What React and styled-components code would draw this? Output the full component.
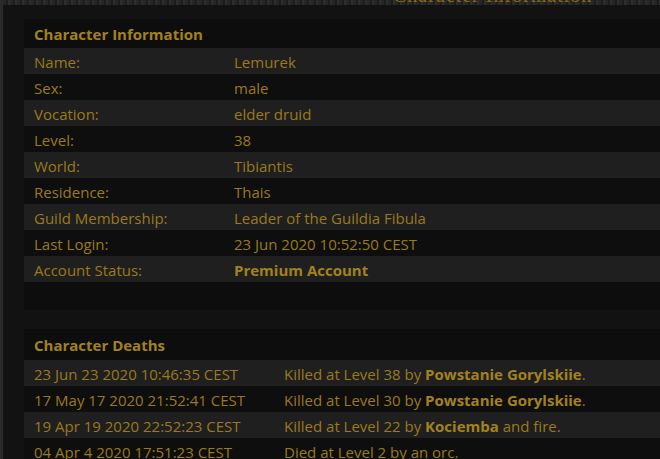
import React from 'react'
import styled, { createGlobalStyle } from 'styled-components'

const GlobalStyle = createGlobalStyle`
  html, body {
    margin: 0;
    padding: 0;
    background: #121212;
    overflow: hidden;
  }
  body {
    font-family: "Open Sans", "Noto Sans", "DejaVu Sans", sans-serif;
    font-size: 15px;
    color: #9a7a1c;
  }
`

const Page = styled.div`
  width: 660px;
  height: 459px;
  border-left: 3px solid #2a2a2a;
  box-sizing: border-box;
  overflow: hidden;
`

const TopBar = styled.div`
  height: 5px;
  overflow: hidden;
  background: repeating-linear-gradient(90deg, #262626 0 3px, #1c1c1c 3px 5px, #2e2e2e 5px 7px);
  display: flex;
  justify-content: flex-start;
  padding-left: 390px;
`

const TopTitle = styled.span`
  font-family: "Liberation Serif", serif;
  font-size: 20px;
  line-height: 20px;
  margin-top: -15px;
  color: #8a6a1a;
  letter-spacing: 1px;
  white-space: nowrap;
`

const Content = styled.div`
  padding: 14px 0 0 21px;
  display: flex;
  flex-direction: column;
  gap: 19px;
`

const Panel = styled.section`
  background: #0d0d0d;
  width: 700px;
  padding-bottom: ${({ $bottom }) => $bottom || 0}px;
`

const SectionTitle = styled.div`
  height: ${({ $h }) => $h}px;
  padding-left: 10px;
  display: flex;
  align-items: center;
  font-weight: 700;
  color: #a3821d;
`

const Row = styled.div`
  display: flex;
  height: 26px;
  align-items: center;
  background: ${({ $odd }) => ($odd ? '#1f1f1f' : '#0e0e0e')};
  white-space: nowrap;
`

const Cell = styled.div`
  width: ${({ $w }) => ($w ? `${$w}px` : 'auto')};
  flex: ${({ $w }) => ($w ? 'none' : '1')};
  padding-left: 10px;
  padding-top: 1px;
  box-sizing: border-box;
`

const Strong = styled.b`
  font-weight: 700;
  color: #a3821d;
`

const info = [
  ['Name:', 'Lemurek'],
  ['Sex:', 'male'],
  ['Vocation:', 'elder druid'],
  ['Level:', '38'],
  ['World:', 'Tibiantis'],
  ['Residence:', 'Thais'],
  ['Guild Membership:', 'Leader of the Guildia Fibula'],
  ['Last Login:', '23 Jun 2020 10:52:50 CEST'],
  ['Account Status:', <Strong key="p">Premium Account</Strong>],
]

const deaths = [
  ['23 Jun 23 2020 10:46:35 CEST', <>Killed at Level 38 by <Strong>Powstanie Gorylskiie</Strong>.</>],
  ['17 May 17 2020 21:52:41 CEST', <>Killed at Level 30 by <Strong>Powstanie Gorylskiie</Strong>.</>],
  ['19 Apr 19 2020 22:52:23 CEST', <>Killed at Level 22 by <Strong>Kociemba</Strong> and fire.</>],
  ['04 Apr 4 2020 17:51:23 CEST', <>Died at Level 2 by an orc.</>],
]

export default function App() {
  return (
    <Page>
      <GlobalStyle />
      <TopBar>
        <TopTitle>Character Information</TopTitle>
      </TopBar>
      <Content>
        <Panel $bottom={28}>
          <SectionTitle $h={29}>Character Information</SectionTitle>
          {info.map((item, i) => (
            <Row key={i} $odd={i % 2 === 0}>
              <Cell $w={200}>{item[0]}</Cell>
              <Cell>{item[1]}</Cell>
            </Row>
          ))}
        </Panel>
        <Panel>
          <SectionTitle $h={31}>Character Deaths</SectionTitle>
          {deaths.map((item, i) => (
            <Row key={i} $odd={i % 2 === 0}>
              <Cell $w={250}>{item[0]}</Cell>
              <Cell>{item[1]}</Cell>
            </Row>
          ))}
        </Panel>
      </Content>
    </Page>
  )
}
